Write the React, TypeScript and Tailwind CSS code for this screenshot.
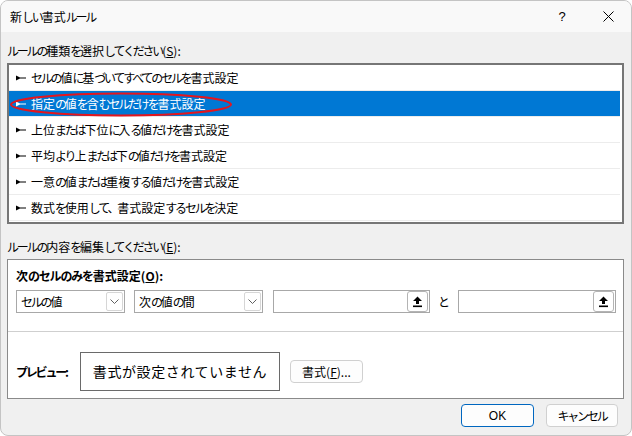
const rules = [
  'セルの値に基づいてすべてのセルを書式設定',
  '指定の値を含むセルだけを書式設定',
  '上位または下位に入る値だけを書式設定',
  '平均より上または下の値だけを書式設定',
  '一意の値または重複する値だけを書式設定',
  '数式を使用して、書式設定するセルを決定',
];

// kana in the dialog font are narrower than kanji, so squeeze kana runs
const KANA = /[\u3000-\u303f\u3040-\u30ff]/;

const Jp = ({text, tight = true}: {text: string; tight?: boolean}) => {
  const runs: {kana: boolean; s: string}[] = [];
  for (const ch of text) {
    const kana = KANA.test(ch);
    const last = runs[runs.length - 1];
    if (last && last.kana === kana) last.s += ch;
    else runs.push({kana, s: ch});
  }
  return (
    <>
      {runs.map((r, i) =>
        r.kana ? (
          <span key={i} className={tight ? 'tracking-[-2.2px]' : 'tracking-[-1.2px]'}>{r.s}</span>
        ) : (
          <span key={i}>{r.s}</span>
        ),
      )}
    </>
  );
};

const Bullet = ({color}: {color: string}) => (
  <svg width={10} height={6} viewBox="0 0 10 6" className="shrink-0">
    <path d="M0 0.5 L4 2.4 L10 2.4 L10 3.6 L4 3.6 L0 5.5 Z" fill={color}/>
  </svg>
);

const Chevron = () => (
  <div className="w-[17px] h-[19px] border border-[#d6d6d6] rounded-[2px] flex items-center justify-center mr-[1px]">
    <svg width={9} height={5} viewBox="0 0 9 5">
      <path d="M0.5 0.5 L4.5 4.5 L8.5 0.5" fill="none" stroke="#606060" strokeWidth={1}/>
    </svg>
  </div>
);

const RefButton = () => (
  <div className="w-[21px] h-[21px] border border-[#b4b4b4] rounded-[3px] bg-white flex items-center justify-center">
    <svg width={11} height={12} viewBox="0 0 11 12">
      <path d="M5.5 0.5 L10 5 L7 5 L7 8 L4 8 L4 5 L1 5 Z" fill="#000"/>
      <rect x={1} y={9.5} width={9} height={1.6} fill="#000"/>
    </svg>
  </div>
);

const Select = ({label, width}: {label: string; width: string}) => (
  <div className={`${width} h-[23px] border border-[#a8a8a8] bg-white flex items-center justify-between pl-[4px]`}>
    <span className="text-[12px] leading-[16px]"><Jp text={label}/></span>
    <Chevron/>
  </div>
);

const RefInput = ({width}: {width: string}) => (
  <div className={`${width} h-[23px] border border-[#a8a8a8] bg-white flex items-center justify-end pr-[1px]`}>
    <RefButton/>
  </div>
);

export default function App() {
  return (
    <div
      className="w-[632px] h-[436px] bg-[#f0f0f0] border border-[#c4c4c4] rounded-[8px] overflow-hidden flex flex-col text-black font-['Noto_Sans_CJK_JP',sans-serif]">
      <div className="h-[31px] shrink-0 bg-[#f9f9f9] flex items-center justify-between">
        <span className="pl-[9px] text-[12px] leading-[16px]"><Jp text="新しい書式ルール"/></span>
        <div className="flex items-center h-full">
          <div className="w-[46px] h-full flex items-center justify-center text-[13px] font-['Liberation_Sans',sans-serif]">?</div>
          <div className="w-[46px] h-full flex items-center justify-center">
            <svg width={11} height={11} viewBox="0 0 11 11">
              <path d="M0.5 0.5 L10.5 10.5 M10.5 0.5 L0.5 10.5" stroke="#000" strokeWidth={1}/>
            </svg>
          </div>
        </div>
      </div>

      <div className="flex flex-col px-[6px]">
        <div className="mt-[11px] text-[12px] leading-[16px]">
          <Jp text="ルールの種類を選択してください"/>(<span className="underline">S</span>):
        </div>

        <div className="relative mt-[4px] h-[161px] w-[617px] border-2 border-[#767676] bg-white pr-[2px]">
          {rules.map((rule, i) => {
            const selected = i === 1;
            return (
              <div
                key={rule}
                className={`h-[26px] flex items-center gap-[5px] pl-[7px] border-b border-[#ececec] ${selected ? 'bg-[#0078d4] text-white' : ''}`}
              >
                <Bullet color={selected ? '#fff' : '#000'}/>
                <span className="text-[12px] leading-[16px]"><Jp text={rule}/></span>
              </div>
            );
          })}
          <svg width={222} height={25} viewBox="0 0 222 25" className="absolute left-[1px] top-[27px]">
            <ellipse cx={111} cy={12.5} rx={110} ry={11} fill="none" stroke="#e3161e" strokeWidth={2}/>
          </svg>
        </div>

        <div className="mt-[15px] text-[12px] leading-[16px]">
          <Jp text="ルールの内容を編集してください"/>(<span className="underline">E</span>):
        </div>

        <div className="mt-[4px] h-[140px] w-[617px] border border-[#8a8a8a] bg-white flex flex-col">
          <div className="pt-[8px] pl-[8px] text-[12px] leading-[16px] font-bold">
            <Jp text="次のセルのみを書式設定" tight={false}/>(<span className="underline">O</span>):
          </div>
          <div className="mt-[6px] pl-[8px] flex items-center">
            <Select label="セルの値" width="w-[109px]"/>
            <div className="w-[9px]"/>
            <Select label="次の値の間" width="w-[129px]"/>
            <div className="w-[10px]"/>
            <RefInput width="w-[157px]"/>
            <span className="w-[28px] text-center text-[12px] leading-[16px]">と</span>
            <RefInput width="w-[158px]"/>
          </div>
          <div className="mt-[18px] h-px bg-[#cfcfcf]"/>
          <div className="mt-[20px] pl-[8px] flex items-center">
            <span className="w-[64px] text-[12px] leading-[16px] font-bold"><Jp text="プレビュー"/>:</span>
            <div className="w-[200px] h-[39px] border border-[#6a6a6a] flex items-center justify-center text-[14px] tracking-[0.6px]">
              書式が設定されていません
            </div>
            <div className="ml-[10px] w-[73px] h-[23px] border border-[#d0d0d0] rounded-[4px] bg-[#fdfdfd] flex items-center justify-center text-[12px] leading-[16px]">
              書式(<span className="underline">F</span>)...
            </div>
          </div>
        </div>

        <div className="mt-[5px] flex justify-end gap-[12px] pr-[7px]">
          <div className="w-[73px] h-[23px] border border-[#0067c0] rounded-[4px] bg-[#fdfdfd] flex items-center justify-center text-[12px] leading-[16px] font-['Liberation_Sans',sans-serif]">
            OK
          </div>
          <div className="w-[72px] h-[23px] border border-[#d0d0d0] rounded-[4px] bg-[#fdfdfd] flex items-center justify-center text-[12px] leading-[16px]">
            <Jp text="キャンセル"/>
          </div>
        </div>
      </div>
    </div>
  );
}
